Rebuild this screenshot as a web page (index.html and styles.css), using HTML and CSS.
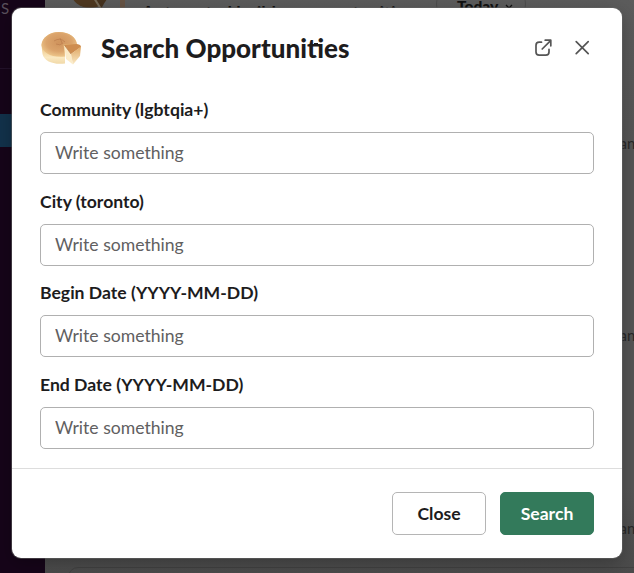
FILE: index.html
```html
<!DOCTYPE html>
<html lang="en">
<head>
<meta charset="utf-8">
<title>Search Opportunities</title>
<link rel="stylesheet" href="styles.css">
</head>
<body>
<div class="workspace" aria-hidden="true">
  <aside class="sidebar"><span class="side-text">S</span><span class="side-line"></span><span class="side-active"></span></aside>
  <main class="channel">
    <svg class="avatar" width="42" height="36" viewBox="0 0 42 36"><ellipse cx="20" cy="18" rx="19" ry="16" fill="#4f3820"/><path d="M23 15 41 17 31 35z" fill="#45321e"/><path d="M24 24 31 35" stroke="#776b58" stroke-width="2"/></svg>
    <span class="avatar-line"></span>
    <span class="message">Automated builders opportunities</span>
    <span class="today">Today<svg width="8" height="6" viewBox="0 0 8 6"><path d="M1 1l3 3 3-3" fill="none" stroke="#111" stroke-width="1.3"/></svg></span>
    <span class="edge edge-a">an</span>
    <span class="edge edge-b">an</span>
    <span class="edge edge-c">an</span>
    <span class="composer"></span>
  </main>
</div>
<section class="modal" role="dialog" aria-labelledby="title">
  <header class="head">
    <svg class="logo" width="42" height="36" viewBox="0 0 42 36">
      <defs>
        <radialGradient id="top" cx=".5" cy=".42" r=".6"><stop offset="0" stop-color="#cf935c"/><stop offset=".6" stop-color="#dba46c"/><stop offset="1" stop-color="#efc98d"/></radialGradient>
        <linearGradient id="side" x1="0" x2="0" y1="0" y2="1"><stop offset=".5" stop-color="#efc98a"/><stop offset=".8" stop-color="#fae8c0"/><stop offset="1" stop-color="#f1d9a8"/></linearGradient>
        <linearGradient id="crust" x1="0" x2="0" y1="0" y2="1"><stop offset="0" stop-color="#dfa662"/><stop offset="1" stop-color="#faeac6"/></linearGradient>
      </defs>
      <path d="M.5 15C1 8 8 2 18 2c10 0 17 5 18 13l-12 3v15.500C12 35 3 31 1.500 24z" fill="url(#side)"/>
      <path d="M.5 15C1 8 8 2 18 2c10 0 17 5 18 12H22.500l1.500 12.500C11 28 1 23 .5 15z" fill="url(#top)"/>
      <path d="M13 11q6-4 11 1M15 14q4 2 7-1M19 8l2 5" fill="none" stroke="#ba7b4c" stroke-width=".7"/>
      <path d="M23 14.500 36 14Q40 14.500 40 17L30 24z" fill="#ce8d50"/>
      <path d="M23 14.500 30 24 32 34.500 25 29z" fill="#fbebc8"/>
      <path d="M30 24 40 16.500 39 26 32 34.500z" fill="url(#crust)"/>
      <path d="M23 14.500 30 24" stroke="#bd7b41" stroke-width=".8"/>
    </svg>
    <h1 id="title">Search Opportuni<span class="ti">ti</span>es</h1>
    <button class="icon" aria-label="Open in new window"><svg width="20" height="20" viewBox="0 0 20 20"><path d="M8.500 4.200H6.200Q3 4.200 3 7.400v6.500q0 3.200 3.200 3.200h6.600q3.200 0 3.200-3.200v-2.500M9.200 11l8.400-8.400M12.200 2.200h5.600v5.600" /></svg></button>
    <button class="icon" aria-label="Close dialog"><svg width="20" height="20" viewBox="0 0 20 20"><path d="M4.200 3.700l12 12M16.200 3.700l-12 12"/></svg></button>
  </header>
  <form class="fields">
    <label class="field"><span>Community (lgbtqia+)</span><input placeholder="Write something"></label>
    <label class="field"><span>City (toronto)</span><input placeholder="Write something"></label>
    <label class="field"><span>Begin Date (YYYY-MM-DD)</span><input placeholder="Write something"></label>
    <label class="field"><span>End Date (YYYY-MM-DD)</span><input placeholder="Write something"></label>
  </form>
  <footer class="foot"><button class="btn">Close</button><button class="btn primary">Search</button></footer>
</section>
</body>
</html>
```
FILE: styles.css
```css
* { box-sizing: border-box; }
body { margin: 0; width: 634px; height: 573px; overflow: hidden; font-family: Lato, sans-serif; color: #1d1c1d; background: #575757; }
.workspace { position: absolute; inset: 0; display: flex; overflow: hidden; }
.sidebar { position: relative; width: 45px; background: #160519; }
.side-text { position: absolute; left: 1px; top: -1px; font-size: 15px; color: #5a505c; }
.side-line { position: absolute; top: 68px; width: 45px; height: 1px; background: #23122a; }
.side-active { position: absolute; top: 114px; width: 45px; height: 33px; background: #12324b; }
.channel { position: relative; flex: 1; background: linear-gradient(#5c5c5c, #555 25%, #555 85%, #4b4b4b); }
.avatar { position: absolute; left: 25px; top: -26px; }
.avatar-line { position: absolute; left: 75px; top: 0; width: 5px; height: 9px; background: #665344; }
.message { position: absolute; left: 97px; top: 2px; font-size: 18px; font-weight: 700; color: #111; }
.today { position: absolute; left: 391px; top: -14px; width: 90px; height: 36px; border: 1px solid #4d4d4d; border-radius: 18px; padding: 9px 0 0 20px; font-size: 15.5px; line-height: 20px; font-weight: 900; color: #111; }
.today svg { margin: 0 0 2px 7px; }
.edge { position: absolute; left: 574.5px; font-size: 15px; line-height: 20px; color: #282828; }
.edge-a { top: 133px; }
.edge-b { top: 325px; }
.edge-c { top: 518px; }
.composer { position: absolute; left: 23px; top: 567px; width: 600px; height: 40px; border: 1px solid #414141; border-radius: 10px; }
.modal { position: relative; width: 610px; height: 550px; margin: 8px 12px 0; background: #fff; border-radius: 9px; box-shadow: 0 0 0 1px #6668, 0 5px 18px #0004; display: flex; flex-direction: column; }
.head { display: flex; align-items: center; height: 80px; padding: 0 30px 0 29px; }
.logo { margin-right: 18px; }
h1 { margin: 0 auto 0 0; font-size: 26px; line-height: 32px; font-weight: 900; }
/* Joins the crossbar of the t to the following i. */
.ti { position: relative; }
.ti::after { content: ""; position: absolute; left: 7px; top: 11px; width: 4px; height: 3px; background: currentColor; }
.icon { display: block; width: 20px; height: 20px; padding: 0; border: 0; background: none; }
.icon + .icon { margin-left: 19px; }
.icon svg { display: block; fill: none; stroke: #555; stroke-width: 1.7; stroke-linecap: round; stroke-linejoin: round; }
.fields { height: 380px; padding: 10px 28px 0; display: flex; flex-direction: column; gap: 16.5px; }
.field { display: block; height: 75px; }
.field span { display: block; height: 34px; font-size: 17.6px; line-height: 24.5px; font-weight: 700; }
input { display: block; width: 554px; height: 42px; padding: 0 14px 1px; border: 1px solid #b0b0b0; border-radius: 5px; font: 17.6px/25px Lato, sans-serif; background: #fff; }
input::placeholder { color: #616061; opacity: 1; }
.foot { display: flex; justify-content: flex-end; gap: 14px; height: 90px; padding: 23px 28px 0 0; border-top: 1px solid #ddd; }
.btn { width: 94px; height: 43px; padding: 0; border: 1px solid #b5b5b5; border-radius: 5px; background: #fff; font: 700 17.6px/25px Lato, sans-serif; color: #1d1c1d; }
.primary { border-color: #337a5b; background: #337a5b; color: #fff; }
```
